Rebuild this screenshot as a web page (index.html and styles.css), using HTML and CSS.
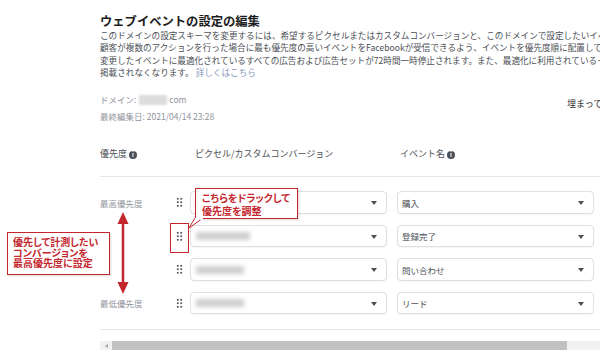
FILE: index.html
```html
<!DOCTYPE html>
<html lang="ja">
<head>
  <meta charset="UTF-8" />
  <meta name="viewport" content="width=device-width, initial-scale=1.0"/>
  <title>ウェブイベントの設定の編集</title>
  <link rel="stylesheet" href="styles.css">
</head>
<body>

<div class="screen">
  <main class="page">
    <h1 class="title">ウェブイベントの設定の編集</h1>
    <p class="intro">
      このドメインの設定スキーマを変更するには、希望するピクセルまたはカスタムコンバージョンと、このドメインで設定したいイベントを選択してください。<br>
      顧客が複数のアクションを行った場合に最も優先度の高いイベントをFacebookが受信できるよう、イベントを優先度順に配置してください。<br>
      変更したイベントに最適化されているすべての広告および広告セットが72時間一時停止されます。また、最適化に利用されているイベントを削除すると<br>
      掲載されなくなります。<a href="#">詳しくはこちら</a>
    </p>

    <div class="meta">
      <div>
        <div class="meta-line">ドメイン: <span class="masked"></span>com</div>
        <div class="meta-line">最終編集日: 2021/04/14 23:28</div>
      </div>
      <div class="meta-status">埋まっていないイベントがあります</div>
    </div>

    <!-- Priority table -->
    <div class="table">
      <div class="row head">
        <div class="prio">優先度 <span class="info">i</span></div>
        <div class="handle-cell"></div>
        <div class="col-title">ピクセル/カスタムコンバージョン</div>
        <div class="col-title event">イベント名 <span class="info">i</span></div>
      </div>

      <div class="rows">
        <div class="row">
          <div class="prio">最高優先度</div>
          <div class="handle-cell"><span class="handle"></span></div>
          <div class="select"><span class="masked wide"></span></div>
          <div class="select">購入</div>
        </div>
        <div class="row">
          <div class="prio"></div>
          <div class="handle-cell"><span class="handle"></span></div>
          <div class="select"><span class="masked wide"></span></div>
          <div class="select">登録完了</div>
        </div>
        <div class="row">
          <div class="prio"></div>
          <div class="handle-cell"><span class="handle"></span></div>
          <div class="select"><span class="masked mid"></span></div>
          <div class="select">問い合わせ</div>
        </div>
        <div class="row">
          <div class="prio">最低優先度</div>
          <div class="handle-cell"><span class="handle"></span></div>
          <div class="select"><span class="masked mid"></span></div>
          <div class="select">リード</div>
        </div>
      </div>
    </div>

    <div class="hscroll">
      <span class="hscroll-arrow"></span>
      <span class="hscroll-thumb"></span>
    </div>
  </main>

  <!-- Annotations -->
  <div class="note note-drag">こちらをドラックして<br>優先度を調整</div>
  <svg class="note-tail" width="20" height="12" viewBox="0 0 20 12">
    <polygon points="7,0 15,0 1,10" fill="#fff" stroke="#c4262e" stroke-width="1"/>
    <line x1="7" y1="1" x2="15" y2="1" stroke="#fff" stroke-width="2"/>
  </svg>
  <div class="handle-mark"></div>

  <div class="note note-priority">優先して計測したい<br>コンバージョンを<br>最高優先度に設定</div>
  <svg class="priority-arrow" width="12" height="82" viewBox="0 0 12 82">
    <line x1="6" y1="10" x2="6" y2="72" stroke="#c4262e" stroke-width="2.5"/>
    <polygon points="6,0 11.5,12 0.5,12" fill="#c4262e"/>
    <polygon points="6,82 11.5,70 0.5,70" fill="#c4262e"/>
  </svg>
</div>

</body>
</html>
```

FILE: styles.css
```css
* {
  box-sizing: border-box;
}
body {
  margin: 0;
  font-family: "Noto Sans CJK JP", "Noto Sans", sans-serif;
  background: #fff;
  color: #4b4f56;
  overflow: hidden;
}
.screen {
  position: relative;
  width: 600px;
  height: 355px;
  overflow: hidden;
}
.page {
  width: 500px;
  margin-left: 100px;
  padding-top: 14px;
}
.title {
  margin: 0;
  font-size: 12.3px;
  line-height: 15px;
  font-weight: bold;
  color: #1c1e21;
}
.intro {
  margin: 0;
  font-size: 8.6px;
  line-height: 12.4px;
  white-space: nowrap;
}
.intro a {
  color: #8797bd;
  text-decoration: none;
  margin-left: 2px;
}
.meta {
  display: grid;
  grid-template-columns: 467px auto;
  margin-top: 13px;
}
.meta-line {
  font-size: 8.5px;
  line-height: 14px;
  color: #90949c;
  margin-bottom: 3.5px;
}
.meta-status {
  margin-top: 5px;
  font-size: 9px;
  line-height: 14px;
  color: #333;
  white-space: nowrap;
}
.masked {
  display: inline-block;
  width: 28px;
  height: 10px;
  margin: 0 2px 0 1px;
  vertical-align: middle;
  background: #dcdcdc;
  filter: blur(1px);
}
.masked.wide {
  width: 54px;
  height: 8px;
  background: #cfcfcf;
  filter: blur(2px);
}
.masked.mid {
  width: 48px;
  height: 8px;
  background: #cfcfcf;
  filter: blur(2px);
}

/* table */
.table {
  margin-top: 20px;
}
.row {
  display: flex;
  align-items: center;
  height: 22px;
}
.row.head {
  height: 14px;
  padding-bottom: 0;
  font-size: 9px;
  line-height: 14px;
  color: #4b4f56;
}
.head .prio {
  color: #4b4f56;
  font-size: 9px;
}
.rows {
  border-top: 1px solid #e5e6e9;
  border-bottom: 1px solid #e5e6e9;
  margin-top: 15px;
  padding: 15px 0 15px;
  display: flex;
  flex-direction: column;
  gap: 11.5px;
}
.prio {
  width: 68px;
  flex: none;
  font-size: 8.5px;
  color: #90949c;
}
.handle-cell {
  width: 22px;
  flex: none;
  display: flex;
  justify-content: center;
}
.handle {
  width: 7px;
  height: 10.5px;
  background: radial-gradient(circle, #4b4f56 0.9px, transparent 1.2px);
  background-size: 3.5px 3.5px;
}
.col-title {
  width: 197px;
  flex: none;
  padding-left: 5px;
  white-space: nowrap;
}
.col-title.event {
  margin-left: 10px;
  padding-left: 3px;
}
.info {
  display: inline-block;
  width: 8px;
  height: 8px;
  border-radius: 50%;
  background: #4b4f56;
  color: #fff;
  font-size: 6px;
  line-height: 8px;
  text-align: center;
  font-weight: bold;
  vertical-align: 0;
}
.select {
  position: relative;
  width: 197px;
  height: 22.5px;
  flex: none;
  display: flex;
  align-items: center;
  padding-left: 4px;
  background: #fff;
  border: 1px solid #dddfe2;
  border-radius: 4px;
  box-shadow: 0 1px 1px rgba(0,0,0,0.04);
  font-size: 8.5px;
  color: #4b4f56;
}
.select + .select {
  margin-left: 10px;
}
.select::after {
  content: "";
  position: absolute;
  right: 9px;
  top: 9px;
  border-left: 3.5px solid transparent;
  border-right: 3.5px solid transparent;
  border-top: 4px solid #4b4f56;
}

/* scrollbar */
.hscroll {
  display: flex;
  align-items: center;
  height: 9px;
  margin-top: 11px;
  background: #f1f1f1;
}
.hscroll-arrow {
  width: 12px;
  display: flex;
  justify-content: center;
}
.hscroll-arrow::before {
  content: "";
  border-top: 2.5px solid transparent;
  border-bottom: 2.5px solid transparent;
  border-right: 3px solid #a3a3a3;
}
.hscroll-thumb {
  width: 455px;
  height: 9px;
  background: #c1c1c1;
}

/* annotations */
.note {
  position: absolute;
  background: #fff;
  border: 1px solid #c4262e;
  color: #c4262e;
  font-weight: bold;
  font-size: 10px;
  font-feature-settings: "palt";
  white-space: nowrap;
  box-shadow: 1px 1px 2px rgba(0,0,0,0.15);
}
.note-drag {
  left: 195px;
  top: 188px;
  width: 103px;
  height: 31px;
  padding: 2px 0 0 6px;
  line-height: 13px;
}
.note-tail {
  position: absolute;
  left: 188px;
  top: 218px;
}
.handle-mark {
  position: absolute;
  left: 170px;
  top: 223px;
  width: 19px;
  height: 30px;
  border: 1.5px solid #c4262e;
}
.note-priority {
  left: 7px;
  top: 232px;
  width: 103px;
  height: 43px;
  padding: 4px 0 0 5px;
  line-height: 10.7px;
}
.priority-arrow {
  position: absolute;
  left: 117px;
  top: 212px;
}
```
